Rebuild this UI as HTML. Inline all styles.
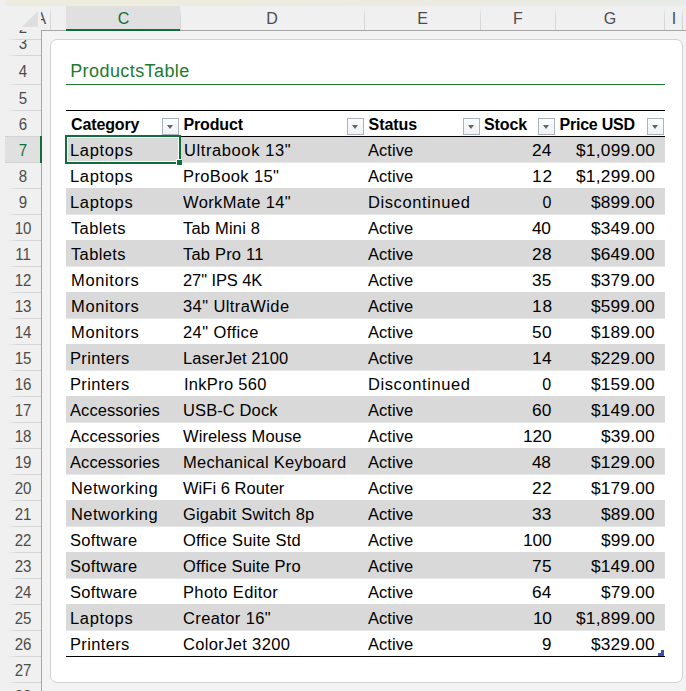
<!DOCTYPE html><html><head><meta charset="utf-8"><title>ProductsTable</title><style>
*{box-sizing:border-box}
html,body{margin:0;padding:0;background:#f0f0f0}
body{width:686px;height:691px;overflow:hidden;background:#f0f0f0;position:relative;font-family:"Liberation Sans",sans-serif;font-size:16px;color:#000}
.abs{position:absolute}
#topband{left:5px;top:0;width:681px;height:6px;background:linear-gradient(90deg,#eeebdf 0%,#eeebdf 45%,#e8ebe6 100%)}
#colhdr{left:0;top:6px;width:686px;height:24px;background:#f0f0f0}
.ch{position:absolute;top:7px;height:23px;line-height:24px;text-align:center;color:#4c4c4c;font-size:16px}
.cs{position:absolute;top:6px;width:1px;height:24px;background:linear-gradient(rgba(208,212,214,0) 0,#d8dadb 45%,#cfd3d5 100%)}
#csel{left:66px;top:6px;width:114px;height:24px;background:#e0e0e0}
#cselg{left:66px;top:29px;width:114px;height:2px;background:#0f6e3a}
#hline{left:41px;top:30px;width:645px;height:1px;background:#a6a6a6}
#tri{left:22px;top:11px;width:0;height:0;border-left:16px solid transparent;border-bottom:16px solid #dedede}
.rh{position:absolute;left:4.8px;width:36px;text-align:center;color:#4c4c4c;font-size:16px;height:26px;line-height:30px;transform:scaleX(0.94)}
.rl{position:absolute;left:5px;width:36px;height:1px;background:linear-gradient(90deg,rgba(212,214,214,0) 2px,#d4d6d6 13px,#d4d6d6 100%)}
#rsel{left:5px;top:136px;width:36px;height:27px;background:#e0e0e0;border-top:1px solid #d0d0d0;border-bottom:1px solid #d0d0d0}
#rselg{left:40px;top:136px;width:2px;height:27px;background:#0f6e3a}
#panel{left:41px;top:30px;width:645px;height:661px;background:#f3f3f3;border-left:1px solid #a6a6a6;border-top:1px solid #a6a6a6}
#card{left:50px;top:39px;width:633px;height:644px;background:#fff;border:1px solid #d2d2d2;border-radius:7px}
#title{left:70.2px;top:59px;font-size:18px;color:#22792f;line-height:24px;white-space:nowrap;letter-spacing:0.42px}
#tline{left:66px;top:84px;width:599px;height:1px;background:#1e7a32}
.bl{position:absolute;left:66px;width:599px;height:1px;background:#000}
.band{position:absolute;left:66px;width:599px;height:27px;background:linear-gradient(#d9d9d9 0,#d9d9d9 26px,rgba(217,217,217,.65) 26px)}
.t{position:absolute;transform-origin:0 50%;white-space:nowrap;height:26px;line-height:26px;font-size:16px}
.b{font-weight:bold}
.r{text-align:right}
.fb{position:absolute;top:118px;width:17px;height:17px;border:1px solid #aab2be;background:linear-gradient(#fbfcfd,#f0f2f7);}
.fb:after{content:"";position:absolute;left:3.6px;top:6px;border-left:3.8px solid transparent;border-right:3.8px solid transparent;border-top:4.3px solid #5f6862}
#sel{left:65px;top:135px;width:116px;height:29px;border:2px solid #0f6e3a;box-shadow:inset 0 0 0 1px #fff}
#fh{left:176px;top:159px;width:6px;height:6px;background:#0f6e3a;border:1px solid #fff;border-right:none;border-bottom:none}
</style></head><body>
<div class="abs" id="topband"></div>
<div class="abs" id="colhdr"></div>
<div class="abs" id="csel"></div>
<div class="cs" style="left:50px"></div>
<div class="cs" style="left:180px"></div>
<div class="cs" style="left:364px"></div>
<div class="cs" style="left:480px"></div>
<div class="cs" style="left:555px"></div>
<div class="cs" style="left:664px"></div>
<div class="cs" style="left:682px"></div>
<div class="abs" id="tri"></div>
<div class="ch" style="left:103.5px;width:40px;color:#0f6e3a">C</div>
<div class="ch" style="left:252px;width:40px;color:#4c4c4c">D</div>
<div class="ch" style="left:402.5px;width:40px;color:#4c4c4c">E</div>
<div class="ch" style="left:498px;width:40px;color:#4c4c4c">F</div>
<div class="ch" style="left:590px;width:40px;color:#4c4c4c">G</div>
<div class="ch" style="left:654px;width:40px;color:#4c4c4c">I</div>
<div class="ch" style="left:41px;width:9px;overflow:hidden"><div class="ch" style="left:-5.6px;top:0;width:11px">A</div></div>
<div class="abs" id="rsel"></div>
<div class="rh" style="top:30px;height:9px;overflow:hidden;transform:none;left:5.3px"><div class="rh" style="left:0;top:-10px;line-height:15px">2</div></div>
<div class="rh" style="top:40px;height:15px;overflow:hidden;transform:none;left:5.3px"><div class="rh" style="left:0;top:-1px;line-height:9.5px">3</div></div>
<div class="rh" style="top:55px;height:29px;line-height:33px;left:5.3px">4</div>
<div class="rh" style="top:84px;left:5.3px">5</div>
<div class="rh" style="top:110px;left:5.3px">6</div>
<div class="rh" style="top:136px;color:#0f6e3a;left:5.3px">7</div>
<div class="rh" style="top:162px;left:5.3px">8</div>
<div class="rh" style="top:188px;left:5.3px">9</div>
<div class="rh" style="top:214px">10</div>
<div class="rh" style="top:240px">11</div>
<div class="rh" style="top:266px">12</div>
<div class="rh" style="top:292px">13</div>
<div class="rh" style="top:318px">14</div>
<div class="rh" style="top:344px">15</div>
<div class="rh" style="top:370px">16</div>
<div class="rh" style="top:396px">17</div>
<div class="rh" style="top:422px">18</div>
<div class="rh" style="top:448px">19</div>
<div class="rh" style="top:474px">20</div>
<div class="rh" style="top:500px">21</div>
<div class="rh" style="top:526px">22</div>
<div class="rh" style="top:552px">23</div>
<div class="rh" style="top:578px">24</div>
<div class="rh" style="top:604px">25</div>
<div class="rh" style="top:630px">26</div>
<div class="rh" style="top:656px">27</div>
<div class="rh" style="top:682px;line-height:29.4px">28</div>
<div class="rl" style="top:39px"></div>
<div class="rl" style="top:55px"></div>
<div class="rl" style="top:84px"></div>
<div class="rl" style="top:110px"></div>
<div class="rl" style="top:136px"></div>
<div class="rl" style="top:162px"></div>
<div class="rl" style="top:188px"></div>
<div class="rl" style="top:214px"></div>
<div class="rl" style="top:240px"></div>
<div class="rl" style="top:266px"></div>
<div class="rl" style="top:292px"></div>
<div class="rl" style="top:318px"></div>
<div class="rl" style="top:344px"></div>
<div class="rl" style="top:370px"></div>
<div class="rl" style="top:396px"></div>
<div class="rl" style="top:422px"></div>
<div class="rl" style="top:448px"></div>
<div class="rl" style="top:474px"></div>
<div class="rl" style="top:500px"></div>
<div class="rl" style="top:526px"></div>
<div class="rl" style="top:552px"></div>
<div class="rl" style="top:578px"></div>
<div class="rl" style="top:604px"></div>
<div class="rl" style="top:630px"></div>
<div class="rl" style="top:656px"></div>
<div class="rl" style="top:682px"></div>
<div class="abs" id="panel"></div>
<div class="abs" id="cselg"></div>
<div class="abs" id="rselg"></div>
<div class="abs" id="card"></div>
<div class="abs" id="title">ProductsTable</div>
<div class="abs" id="tline"></div>
<div class="band" style="top:136px"></div>
<div class="band" style="top:188px"></div>
<div class="band" style="top:240px"></div>
<div class="band" style="top:292px"></div>
<div class="band" style="top:344px"></div>
<div class="band" style="top:396px"></div>
<div class="band" style="top:448px"></div>
<div class="band" style="top:500px"></div>
<div class="band" style="top:552px"></div>
<div class="band" style="top:604px"></div>
<div class="bl" style="top:110px"></div>
<div class="bl" style="top:136px"></div>
<div class="bl" style="top:656px"></div>
<div class="t b" style="left:71.00px;top:112px;letter-spacing:-0.123px;transform:scaleX(1.0000)">Category</div>
<div class="t b" style="left:183.40px;top:112px;letter-spacing:-0.120px;transform:scaleX(1.0000)">Product</div>
<div class="t b" style="left:368.60px;top:112px;letter-spacing:-0.080px;transform:scaleX(1.0000)">Status</div>
<div class="t b" style="left:484.00px;top:112px;letter-spacing:-0.075px;transform:scaleX(1.0000)">Stock</div>
<div class="t b" style="left:559.45px;top:112px;letter-spacing:-0.212px;transform:scaleX(1.0000)">Price USD</div>
<div class="t" style="left:69.87px;top:138px;letter-spacing:0.650px;transform:scaleX(1.0300)">Laptops</div>
<div class="t" style="left:183.79px;top:138px;letter-spacing:0.587px;transform:scaleX(1.0300)">Ultrabook 13&quot;</div>
<div class="t" style="left:368.30px;top:138px;letter-spacing:0.068px;transform:scaleX(1.0300)">Active</div>
<div class="t" style="left:532.40px;top:138px;letter-spacing:0.169px;transform:scaleX(1.0800)">24</div>
<div class="t" style="left:575.50px;top:138px;letter-spacing:0.234px;transform:scaleX(1.0800)">$1,099.00</div>
<div class="t" style="left:69.87px;top:164px;letter-spacing:0.650px;transform:scaleX(1.0300)">Laptops</div>
<div class="t" style="left:183.32px;top:164px;letter-spacing:0.384px;transform:scaleX(1.0300)">ProBook 15&quot;</div>
<div class="t" style="left:368.30px;top:164px;letter-spacing:0.069px;transform:scaleX(1.0300)">Active</div>
<div class="t" style="left:532.40px;top:164px;letter-spacing:0.905px;transform:scaleX(1.0800)">12</div>
<div class="t" style="left:575.50px;top:164px;letter-spacing:0.234px;transform:scaleX(1.0800)">$1,299.00</div>
<div class="t" style="left:69.87px;top:190px;letter-spacing:0.650px;transform:scaleX(1.0300)">Laptops</div>
<div class="t" style="left:183.40px;top:190px;letter-spacing:0.362px;transform:scaleX(1.0300)">WorkMate 14&quot;</div>
<div class="t" style="left:367.87px;top:190px;letter-spacing:0.589px;transform:scaleX(1.0300)">Discontinued</div>
<div class="t" style="left:542.48px;top:190px;letter-spacing:0.000px;transform:scaleX(1.0000)">0</div>
<div class="t" style="left:590.50px;top:190px;letter-spacing:0.164px;transform:scaleX(1.0800)">$899.00</div>
<div class="t" style="left:70.73px;top:216px;letter-spacing:0.367px;transform:scaleX(1.0300)">Tablets</div>
<div class="t" style="left:183.00px;top:216px;letter-spacing:0.206px;transform:scaleX(1.0300)">Tab Mini 8</div>
<div class="t" style="left:368.30px;top:216px;letter-spacing:0.069px;transform:scaleX(1.0300)">Active</div>
<div class="t" style="left:532.49px;top:216px;letter-spacing:-0.222px;transform:scaleX(1.0800)">40</div>
<div class="t" style="left:590.50px;top:216px;letter-spacing:0.164px;transform:scaleX(1.0800)">$349.00</div>
<div class="t" style="left:70.73px;top:242px;letter-spacing:0.367px;transform:scaleX(1.0300)">Tablets</div>
<div class="t" style="left:183.00px;top:242px;letter-spacing:0.196px;transform:scaleX(1.0300)">Tab Pro 11</div>
<div class="t" style="left:368.30px;top:242px;letter-spacing:0.068px;transform:scaleX(1.0300)">Active</div>
<div class="t" style="left:532.40px;top:242px;letter-spacing:0.281px;transform:scaleX(1.0800)">28</div>
<div class="t" style="left:590.50px;top:242px;letter-spacing:0.164px;transform:scaleX(1.0800)">$649.00</div>
<div class="t" style="left:70.72px;top:268px;letter-spacing:0.635px;transform:scaleX(1.0300)">Monitors</div>
<div class="t" style="left:183.20px;top:268px;letter-spacing:-0.086px;transform:scaleX(1.0300)">27&quot; IPS 4K</div>
<div class="t" style="left:368.30px;top:268px;letter-spacing:0.069px;transform:scaleX(1.0300)">Active</div>
<div class="t" style="left:532.40px;top:268px;letter-spacing:0.225px;transform:scaleX(1.0800)">35</div>
<div class="t" style="left:590.50px;top:268px;letter-spacing:0.164px;transform:scaleX(1.0800)">$379.00</div>
<div class="t" style="left:70.71px;top:294px;letter-spacing:0.634px;transform:scaleX(1.0300)">Monitors</div>
<div class="t" style="left:183.20px;top:294px;letter-spacing:0.401px;transform:scaleX(1.0300)">34&quot; UltraWide</div>
<div class="t" style="left:368.30px;top:294px;letter-spacing:0.068px;transform:scaleX(1.0300)">Active</div>
<div class="t" style="left:532.40px;top:294px;letter-spacing:0.779px;transform:scaleX(1.0800)">18</div>
<div class="t" style="left:590.50px;top:294px;letter-spacing:0.164px;transform:scaleX(1.0800)">$599.00</div>
<div class="t" style="left:70.72px;top:320px;letter-spacing:0.635px;transform:scaleX(1.0300)">Monitors</div>
<div class="t" style="left:183.20px;top:320px;letter-spacing:0.412px;transform:scaleX(1.0300)">24&quot; Office</div>
<div class="t" style="left:368.30px;top:320px;letter-spacing:0.069px;transform:scaleX(1.0300)">Active</div>
<div class="t" style="left:532.40px;top:320px;letter-spacing:0.282px;transform:scaleX(1.0800)">50</div>
<div class="t" style="left:590.50px;top:320px;letter-spacing:0.164px;transform:scaleX(1.0800)">$189.00</div>
<div class="t" style="left:69.97px;top:346px;letter-spacing:0.358px;transform:scaleX(1.0300)">Printers</div>
<div class="t" style="left:183.30px;top:346px;letter-spacing:0.054px;transform:scaleX(1.0300)">LaserJet 2100</div>
<div class="t" style="left:368.30px;top:346px;letter-spacing:0.068px;transform:scaleX(1.0300)">Active</div>
<div class="t" style="left:532.40px;top:346px;letter-spacing:0.319px;transform:scaleX(1.0800)">14</div>
<div class="t" style="left:590.50px;top:346px;letter-spacing:0.164px;transform:scaleX(1.0800)">$229.00</div>
<div class="t" style="left:69.97px;top:372px;letter-spacing:0.358px;transform:scaleX(1.0300)">Printers</div>
<div class="t" style="left:183.87px;top:372px;letter-spacing:0.285px;transform:scaleX(1.0300)">InkPro 560</div>
<div class="t" style="left:367.87px;top:372px;letter-spacing:0.589px;transform:scaleX(1.0300)">Discontinued</div>
<div class="t" style="left:542.29px;top:372px;letter-spacing:0.000px;transform:scaleX(1.0000)">0</div>
<div class="t" style="left:590.50px;top:372px;letter-spacing:0.164px;transform:scaleX(1.0800)">$159.00</div>
<div class="t" style="left:70.39px;top:398px;letter-spacing:0.077px;transform:scaleX(1.0300)">Accessories</div>
<div class="t" style="left:183.22px;top:398px;letter-spacing:0.119px;transform:scaleX(1.0300)">USB-C Dock</div>
<div class="t" style="left:368.30px;top:398px;letter-spacing:0.068px;transform:scaleX(1.0300)">Active</div>
<div class="t" style="left:532.40px;top:398px;letter-spacing:0.239px;transform:scaleX(1.0800)">60</div>
<div class="t" style="left:590.50px;top:398px;letter-spacing:0.164px;transform:scaleX(1.0800)">$149.00</div>
<div class="t" style="left:70.39px;top:424px;letter-spacing:0.077px;transform:scaleX(1.0300)">Accessories</div>
<div class="t" style="left:183.09px;top:424px;letter-spacing:0.087px;transform:scaleX(1.0300)">Wireless Mouse</div>
<div class="t" style="left:368.30px;top:424px;letter-spacing:0.069px;transform:scaleX(1.0300)">Active</div>
<div class="t" style="left:522.72px;top:424px;letter-spacing:-0.134px;transform:scaleX(1.0800)">120</div>
<div class="t" style="left:600.73px;top:424px;letter-spacing:0.163px;transform:scaleX(1.0800)">$39.00</div>
<div class="t" style="left:70.39px;top:450px;letter-spacing:0.077px;transform:scaleX(1.0300)">Accessories</div>
<div class="t" style="left:183.30px;top:450px;letter-spacing:0.249px;transform:scaleX(1.0300)">Mechanical Keyboard</div>
<div class="t" style="left:368.30px;top:450px;letter-spacing:0.068px;transform:scaleX(1.0300)">Active</div>
<div class="t" style="left:532.49px;top:450px;letter-spacing:-0.222px;transform:scaleX(1.0800)">48</div>
<div class="t" style="left:590.50px;top:450px;letter-spacing:0.164px;transform:scaleX(1.0800)">$129.00</div>
<div class="t" style="left:70.72px;top:476px;letter-spacing:0.456px;transform:scaleX(1.0300)">Networking</div>
<div class="t" style="left:183.09px;top:476px;letter-spacing:0.049px;transform:scaleX(1.0300)">WiFi 6 Router</div>
<div class="t" style="left:368.30px;top:476px;letter-spacing:0.069px;transform:scaleX(1.0300)">Active</div>
<div class="t" style="left:532.40px;top:476px;letter-spacing:0.335px;transform:scaleX(1.0800)">22</div>
<div class="t" style="left:590.50px;top:476px;letter-spacing:0.164px;transform:scaleX(1.0800)">$179.00</div>
<div class="t" style="left:70.71px;top:502px;letter-spacing:0.456px;transform:scaleX(1.0300)">Networking</div>
<div class="t" style="left:183.36px;top:502px;letter-spacing:0.183px;transform:scaleX(1.0300)">Gigabit Switch 8p</div>
<div class="t" style="left:368.30px;top:502px;letter-spacing:0.068px;transform:scaleX(1.0300)">Active</div>
<div class="t" style="left:532.40px;top:502px;letter-spacing:0.231px;transform:scaleX(1.0800)">33</div>
<div class="t" style="left:600.73px;top:502px;letter-spacing:0.163px;transform:scaleX(1.0800)">$89.00</div>
<div class="t" style="left:70.40px;top:528px;letter-spacing:0.305px;transform:scaleX(1.0300)">Software</div>
<div class="t" style="left:182.93px;top:528px;letter-spacing:0.221px;transform:scaleX(1.0300)">Office Suite Std</div>
<div class="t" style="left:368.30px;top:528px;letter-spacing:0.069px;transform:scaleX(1.0300)">Active</div>
<div class="t" style="left:522.72px;top:528px;letter-spacing:-0.134px;transform:scaleX(1.0800)">100</div>
<div class="t" style="left:600.73px;top:528px;letter-spacing:0.163px;transform:scaleX(1.0800)">$99.00</div>
<div class="t" style="left:70.40px;top:554px;letter-spacing:0.305px;transform:scaleX(1.0300)">Software</div>
<div class="t" style="left:182.93px;top:554px;letter-spacing:0.161px;transform:scaleX(1.0300)">Office Suite Pro</div>
<div class="t" style="left:368.30px;top:554px;letter-spacing:0.068px;transform:scaleX(1.0300)">Active</div>
<div class="t" style="left:532.40px;top:554px;letter-spacing:0.268px;transform:scaleX(1.0800)">75</div>
<div class="t" style="left:590.50px;top:554px;letter-spacing:0.164px;transform:scaleX(1.0800)">$149.00</div>
<div class="t" style="left:70.40px;top:580px;letter-spacing:0.305px;transform:scaleX(1.0300)">Software</div>
<div class="t" style="left:183.32px;top:580px;letter-spacing:0.350px;transform:scaleX(1.0300)">Photo Editor</div>
<div class="t" style="left:368.30px;top:580px;letter-spacing:0.069px;transform:scaleX(1.0300)">Active</div>
<div class="t" style="left:532.40px;top:580px;letter-spacing:0.173px;transform:scaleX(1.0800)">64</div>
<div class="t" style="left:600.73px;top:580px;letter-spacing:0.163px;transform:scaleX(1.0800)">$79.00</div>
<div class="t" style="left:69.87px;top:606px;letter-spacing:0.650px;transform:scaleX(1.0300)">Laptops</div>
<div class="t" style="left:183.36px;top:606px;letter-spacing:0.376px;transform:scaleX(1.0300)">Creator 16&quot;</div>
<div class="t" style="left:368.30px;top:606px;letter-spacing:0.068px;transform:scaleX(1.0300)">Active</div>
<div class="t" style="left:533.40px;top:606px;letter-spacing:-0.218px;transform:scaleX(1.0800)">10</div>
<div class="t" style="left:575.50px;top:606px;letter-spacing:0.234px;transform:scaleX(1.0800)">$1,899.00</div>
<div class="t" style="left:69.97px;top:632px;letter-spacing:0.358px;transform:scaleX(1.0300)">Printers</div>
<div class="t" style="left:183.36px;top:632px;letter-spacing:0.343px;transform:scaleX(1.0300)">ColorJet 3200</div>
<div class="t" style="left:368.30px;top:632px;letter-spacing:0.069px;transform:scaleX(1.0300)">Active</div>
<div class="t" style="left:542.14px;top:632px;letter-spacing:0.058px;transform:scaleX(1.0581)">9</div>
<div class="t" style="left:590.50px;top:632px;letter-spacing:0.164px;transform:scaleX(1.0800)">$329.00</div>
<div class="fb" style="left:162px"></div>
<div class="fb" style="left:347px"></div>
<div class="fb" style="left:463px"></div>
<div class="fb" style="left:538px"></div>
<div class="fb" style="left:647px"></div>
<div class="abs" id="sel"></div>
<div class="abs" id="fh"></div>
<div class="abs" style="left:661px;top:650px;width:3px;height:6px;background:#3d50b2"></div>
<div class="abs" style="left:658px;top:653px;width:6px;height:3px;background:#3d50b2"></div>
</body></html>
